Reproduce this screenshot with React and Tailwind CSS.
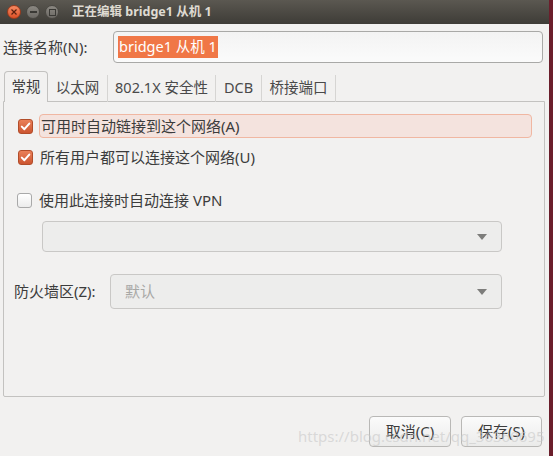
import React from "react";

const FONT = "font-['Noto_Sans','Noto_Sans_CJK_SC',sans-serif]";

function Check({ checked }) {
  if (!checked) {
    return (
      <span className="block w-[15px] h-[15px] shrink-0 rounded-[3px] border border-[#a9a9a9] bg-gradient-to-b from-[#ffffff] to-[#ececec]" />
    );
  }
  return (
    <span className="w-[15px] h-[15px] shrink-0 rounded-[3px] border border-[#b24d2a] bg-gradient-to-b from-[#ea8058] to-[#cc5530] flex items-center justify-center">
      <svg width="11" height="11" viewBox="0 0 11 11">
        <path d="M1.8 5.6 L4.4 8.2 L9.3 2.6" fill="none" stroke="#fff" strokeWidth="2" strokeLinecap="round" strokeLinejoin="round" />
      </svg>
    </span>
  );
}

function Combo({ className, text }) {
  return (
    <div className={`flex items-center justify-between rounded-[4px] border border-[#c9c8c6] bg-[#ededec] ${className}`}>
      <span className="pl-[14px] text-[15px] text-[#a8a8a6]">{text}</span>
      <svg width="10" height="6" viewBox="0 0 10 6" className="mr-[14px]">
        <path d="M0 0 H10 L5 6 Z" fill="#7d7d7b" />
      </svg>
    </div>
  );
}

const TABS = [
  { label: "常规", w: "w-[44px]", active: true },
  { label: "以太网", w: "w-[60px]" },
  { label: "802.1X 安全性", w: "w-[108px]" },
  { label: "DCB", w: "w-[46px]" },
  { label: "桥接端口", w: "w-[74px]" },
];

export default function App() {
  return (
    <div className={`flex w-[553px] h-[456px] overflow-hidden ${FONT} text-[#3c3c3c]`}>
      <div className="relative w-[549px] h-full flex flex-col bg-[#f2f1f0]">
        {/* title bar */}
        <div className="h-[24px] shrink-0 flex items-center bg-gradient-to-b from-[#5b5851] to-[#3e3c37]">
          <div className="flex items-center gap-[5px] pl-[7px]">
            <span className="w-[14px] h-[14px] rounded-full border border-[#9c3a1c] bg-gradient-to-b from-[#f58a62] to-[#dc4f24] flex items-center justify-center">
              <svg width="6" height="6" viewBox="0 0 6 6">
                <path d="M0.5 0.5 L5.5 5.5 M5.5 0.5 L0.5 5.5" stroke="#5a200f" strokeWidth="1.2" />
              </svg>
            </span>
            <span className="w-[14px] h-[14px] rounded-full border border-[#4a4843] bg-gradient-to-b from-[#8b8882] to-[#6c6964] flex items-center justify-center">
              <span className="w-[7px] h-[1.5px] bg-[#3a3935]" />
            </span>
            <span className="w-[14px] h-[14px] rounded-full border border-[#4a4843] bg-gradient-to-b from-[#8b8882] to-[#6c6964] flex items-center justify-center">
              <span className="w-[7px] h-[7px] border border-[#3a3935]" />
            </span>
          </div>
          <span className="ml-[13px] text-[12.5px] font-bold text-[#dfdbd2] leading-none">正在编辑 bridge1 从机 1</span>
        </div>

        {/* name row */}
        <div className="mt-[7px] flex items-center pl-[3px]">
          <span className="w-[110px] text-[15px]">连接名称(N):</span>
          <div className="w-[430px] h-[32px] flex items-center rounded-[4px] border border-[#a9a9a7] bg-gradient-to-b from-[#f3f3f3] to-[#fbfbfb] pl-[4px]">
            <span className="h-[22px] flex items-center px-[1px] bg-[#f07746] text-white text-[14.5px]">bridge1 从机 1</span>
          </div>
        </div>

        {/* tabs */}
        <div className="mt-[9px] ml-[4px] flex items-end h-[30px] relative z-10 -mb-px">
          {TABS.map((t) =>
            t.active ? (
              <div key={t.label} className={`${t.w} h-[31px] flex items-center justify-center rounded-t-[4px] border border-b-0 border-[#c3c2c0] bg-[#f2f1f0] text-[14.5px]`}>
                {t.label}
              </div>
            ) : (
              <div key={t.label} className={`${t.w} h-[27px] flex items-center justify-center border-r border-[#d6d5d3] text-[14.5px] text-[#4a4a4a]`}>
                <span className="-mt-[2px]">{t.label}</span>
              </div>
            )
          )}
        </div>

        {/* notebook frame */}
        <div className="ml-[3px] w-[542px] h-[296px] border border-[#c3c2c0] rounded-b-[2px] flex flex-col">
          <div className="mt-[12px] h-[24px] flex items-center">
            <span className="ml-[14px] flex"><Check checked /></span>
            <div className="ml-[6px] w-[493px] h-[24px] flex items-center rounded-[4px] border border-[#f0b7a2] bg-[#f4e3de] pl-[1px] text-[15px]">
              可用时自动链接到这个网络(A)
            </div>
          </div>
          <div className="mt-[7px] h-[24px] flex items-center">
            <span className="ml-[14px] flex"><Check checked /></span>
            <span className="ml-[7px] text-[15px]">所有用户都可以连接这个网络(U)</span>
          </div>
          <div className="mt-[19px] h-[24px] flex items-center">
            <span className="ml-[13px] flex"><Check /></span>
            <span className="ml-[7px] text-[15px]">使用此连接时自动连接 VPN</span>
          </div>
          <Combo className="mt-[9px] ml-[38px] w-[460px] h-[31px]" text="" />
          <div className="mt-[22px] flex items-center">
            <span className="ml-[10px] w-[96px] text-[15px]">防火墙区(Z):</span>
            <Combo className="w-[392px] h-[35px]" text="默认" />
          </div>
        </div>

        {/* buttons */}
        <div className="mt-[19px] flex justify-end gap-[10px] pr-[7px]">
          <button className="w-[82px] h-[31px] rounded-[4px] border border-[#b9b8b6] bg-gradient-to-b from-[#fbfbfb] to-[#ebebea] text-[15px] text-[#3c3c3c]">取消(C)</button>
          <button className="w-[81px] h-[31px] rounded-[4px] border border-[#b9b8b6] bg-gradient-to-b from-[#fbfbfb] to-[#ebebea] text-[15px] text-[#3c3c3c]">保存(S)</button>
        </div>

        {/* watermark */}
        <span className="absolute left-[298px] top-[425px] text-[15px] text-[#c8c8c8]/60 pointer-events-none">https://blog.csdn.net/qq_36360695</span>
      </div>
      <div className="flex-1 bg-[#6b1e2b]" />
    </div>
  );
}
